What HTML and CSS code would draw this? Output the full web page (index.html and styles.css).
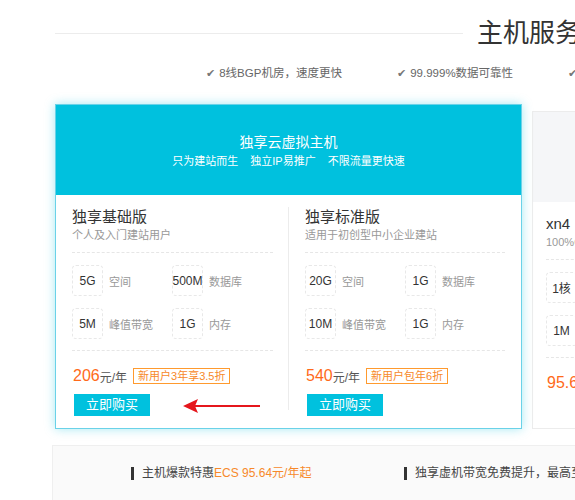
FILE: index.html
```html
<!DOCTYPE html>
<html lang="zh-CN">
<head>
<meta charset="utf-8">
<title>主机服务</title>
<link rel="stylesheet" href="styles.css">
</head>
<body>
<div class="page">
  <div class="top">
    <div class="top-line"></div>
    <h1 class="top-title">主机服务器</h1>
  </div>
  <ul class="features">
    <li class="feature f1"><span class="check">✔</span>8线BGP机房，速度更快</li>
    <li class="feature f2"><span class="check">✔</span>99.999%数据可靠性</li>
    <li class="feature f3"><span class="check">✔</span>免费备案服务</li>
  </ul>

  <div class="cards">
    <div class="card active">
      <div class="card-head">
        <div class="card-title">独享云虚拟主机</div>
        <div class="card-sub"><span>只为建站而生</span><span>独立IP易推广</span><span>不限流量更快速</span></div>
      </div>
      <div class="card-body">
        <div class="plan">
          <div class="plan-head">
            <div class="plan-name">独享基础版</div>
            <div class="plan-desc">个人及入门建站用户</div>
          </div>
          <div class="specs">
            <div class="spec"><span class="spec-val">5G</span><span class="spec-label">空间</span></div>
            <div class="spec"><span class="spec-val">500M</span><span class="spec-label">数据库</span></div>
            <div class="spec"><span class="spec-val">5M</span><span class="spec-label">峰值带宽</span></div>
            <div class="spec"><span class="spec-val">1G</span><span class="spec-label">内存</span></div>
          </div>
          <div class="price-row">
            <span class="price">206</span><span class="unit">元/年</span>
            <span class="badge">新用户3年享3.5折</span>
          </div>
          <a class="buy">立即购买</a>
        </div>
        <div class="divider"></div>
        <div class="plan second">
          <div class="plan-head">
            <div class="plan-name">独享标准版</div>
            <div class="plan-desc">适用于初创型中小企业建站</div>
          </div>
          <div class="specs">
            <div class="spec"><span class="spec-val">20G</span><span class="spec-label">空间</span></div>
            <div class="spec"><span class="spec-val">1G</span><span class="spec-label">数据库</span></div>
            <div class="spec"><span class="spec-val">10M</span><span class="spec-label">峰值带宽</span></div>
            <div class="spec"><span class="spec-val">1G</span><span class="spec-label">内存</span></div>
          </div>
          <div class="price-row">
            <span class="price">540</span><span class="unit">元/年</span>
            <span class="badge">新用户包年6折</span>
          </div>
          <a class="buy">立即购买</a>
        </div>
      </div>
      <svg class="arrow" width="80" height="18" viewBox="0 0 80 18">
        <line x1="12" y1="8" x2="77" y2="8" stroke="#e5161c" stroke-width="2"/>
        <polygon points="0,8 15,1 12,8 15,15" fill="#e5161c"/>
      </svg>
    </div>

    <div class="card plain">
      <div class="card-head light"></div>
      <div class="card-body">
        <div class="plan">
          <div class="plan-head">
            <div class="plan-name">xn4</div>
            <div class="plan-desc">100%CPU性能独享</div>
          </div>
          <div class="specs">
            <div class="spec"><span class="spec-val">1核</span><span class="spec-label">CPU</span></div>
            <div class="spec"><span class="spec-val">1G</span><span class="spec-label">内存</span></div>
            <div class="spec"><span class="spec-val">1M</span><span class="spec-label">带宽</span></div>
            <div class="spec"><span class="spec-val">40G</span><span class="spec-label">系统盘</span></div>
          </div>
          <div class="price-row">
            <span class="price">95.64</span><span class="unit">元/年</span>
          </div>
        </div>
      </div>
    </div>
  </div>

  <div class="promo">
    <div class="promo-item first">主机爆款特惠<em>ECS 95.64元/年起</em></div>
    <div class="promo-item">独享虚机带宽免费提升，最高至20M</div>
  </div>
</div>
</body>
</html>
```

FILE: styles.css
```css
html, body {
  margin: 0;
  padding: 0;
  background: #fff;
}
body {
  width: 575px;
  height: 500px;
  overflow: hidden;
  font-family: "Liberation Sans", "Noto Sans CJK SC", sans-serif;
  color: #333;
}
.page {
  width: 1100px;
}
.top {
  display: flex;
  align-items: center;
  padding-left: 55px;
  padding-top: 19px;
}
.top-line {
  flex: 0 0 408px;
  height: 1px;
  background: #ececec;
  margin-right: 14px;
}
.top-title {
  margin: 0;
  font-size: 26px;
  line-height: 28px;
  font-weight: normal;
  color: #333;
  white-space: nowrap;
}
.features {
  list-style: none;
  margin: 18px 0 0;
  padding: 0 0 0 206px;
  display: flex;
  height: 16px;
}
.feature {
  font-size: 11.5px;
  line-height: 16px;
  color: #666;
  white-space: nowrap;
}
.feature.f1 { width: 191px; }
.feature.f2 { width: 171px; }
.check {
  font-family: "DejaVu Sans", sans-serif;
  font-size: 11px;
  color: #777;
  margin-right: 4px;
}
.cards {
  display: flex;
  align-items: flex-start;
  padding-left: 55px;
  margin-top: 23px;
}
.card {
  box-sizing: border-box;
  background: #fff;
  flex: none;
}
.card.active {
  position: relative;
  width: 467px;
  height: 325px;
  border: 1px solid #6ad2e8;
  box-shadow: 0 0 10px rgba(0, 193, 222, 0.35);
}
.card.plain {
  width: 320px;
  height: 318px;
  margin-left: 10px;
  margin-top: 7px;
  border: 1px solid #ececec;
}
.card-head {
  height: 90px;
  background: #00c1de;
  color: #fff;
  display: flex;
  flex-direction: column;
  align-items: center;
  justify-content: center;
  padding-top: 1px;
  box-sizing: border-box;
}
.card-head.light {
  background: #f5f6f8;
}
.card-title {
  font-size: 14px;
  line-height: 20px;
}
.card-sub {
  margin-top: 1px;
  font-size: 11px;
  line-height: 16px;
}
.card-sub span {
  margin: 0 6px;
}
.card-body {
  display: flex;
  padding: 12px 15px 10px 16px;
}
.card.plain .card-body {
  padding-left: 13px;
}
.plan {
  width: 201px;
  flex: none;
}
.plan.second {
  width: 200px;
  margin-left: 16px;
}
.divider {
  width: 1px;
  background: #ececec;
  margin-left: 15px;
  margin-bottom: 6px;
}
.plan-head {
  padding-bottom: 9px;
  border-bottom: 1px dashed #e6e6e6;
}
.plan-name {
  font-size: 15px;
  line-height: 20px;
  color: #333;
}
.plan-desc {
  font-size: 11px;
  line-height: 16px;
  color: #999;
  white-space: nowrap;
}
.specs {
  display: grid;
  grid-template-columns: 100px 100px;
  row-gap: 12px;
  padding: 12px 0 11px;
  border-bottom: 1px dashed #e6e6e6;
}
.spec {
  display: flex;
  align-items: center;
}
.spec-val {
  box-sizing: border-box;
  width: 31px;
  height: 31px;
  border: 1px dashed #e8e8e8;
  border-radius: 4px;
  display: flex;
  align-items: center;
  justify-content: center;
  font-size: 12px;
  color: #333;
  white-space: nowrap;
}
.spec-label {
  margin-left: 6px;
  font-size: 11px;
  color: #999;
  white-space: nowrap;
}
.price-row {
  display: flex;
  align-items: center;
  height: 16px;
  margin-top: 17px;
  padding-left: 1px;
}
.price {
  font-size: 16px;
  color: #ff6a1a;
}
.unit {
  font-size: 12px;
  color: #555;
}
.badge {
  margin-left: 6px;
  box-sizing: border-box;
  height: 16px;
  padding: 0 4px;
  border: 1px solid #ff9a2e;
  color: #f7892a;
  font-size: 11px;
  line-height: 14px;
  white-space: nowrap;
}
.buy {
  display: block;
  width: 76px;
  height: 22px;
  margin: 10px 0 0 2px;
  background: #00c1de;
  color: #fff;
  font-size: 13px;
  line-height: 22px;
  text-align: center;
}
.arrow {
  position: absolute;
  left: 127px;
  top: 293px;
}
.promo {
  display: flex;
  align-items: flex-start;
  margin: 16px 0 0 52px;
  height: 60px;
  background: #fafafa;
  border: 1px solid #efefef;
  padding: 21px 0 0 78px;
  box-sizing: border-box;
}
.promo-item {
  border-left: 3px solid #333;
  padding-left: 8px;
  font-size: 12px;
  line-height: 13px;
  color: #444;
  white-space: nowrap;
}
.promo-item.first {
  width: 262px;
}
.promo-item em {
  font-style: normal;
  color: #f7892a;
}
```
